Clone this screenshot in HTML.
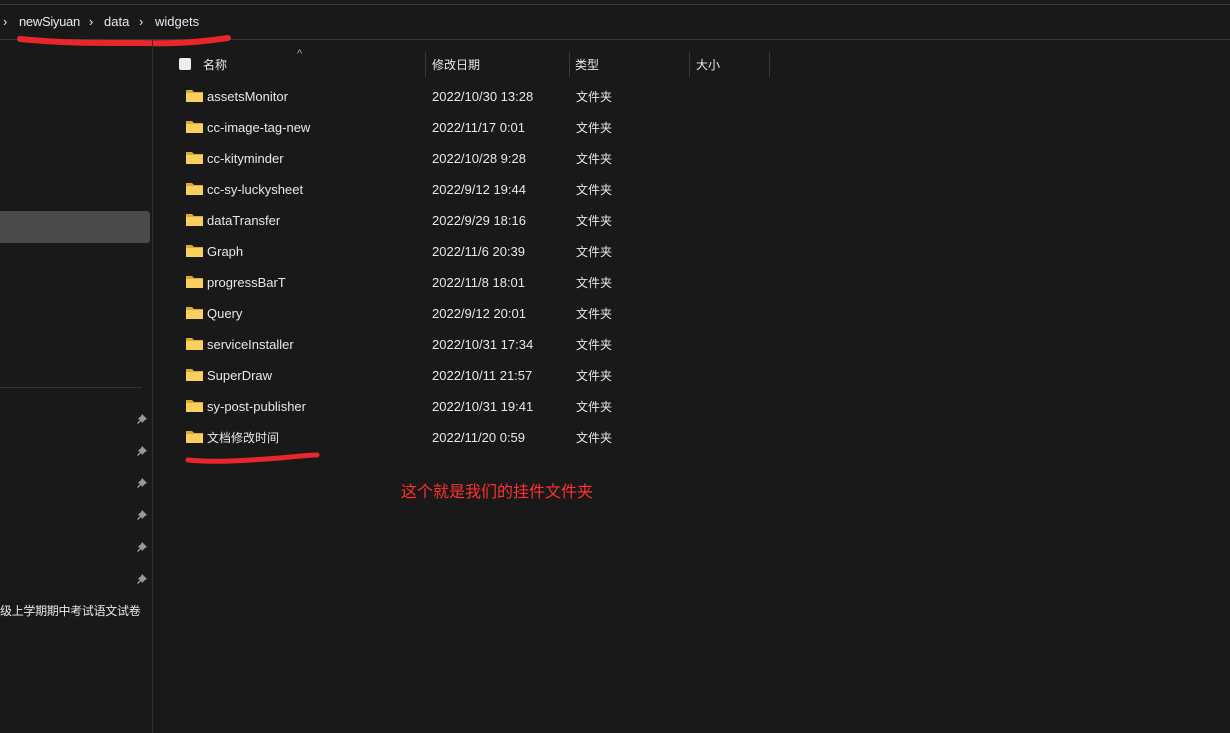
<!DOCTYPE html>
<html><head><meta charset="utf-8"><style>
*{margin:0;padding:0;box-sizing:border-box}
body{width:1230px;height:733px;background:#191919;overflow:hidden;position:relative;font-family:"Liberation Sans","Noto Sans CJK SC",sans-serif;color:#e8e8e8;font-size:13px;line-height:16px}
.a{position:absolute;white-space:nowrap;line-height:16px}
.c{font-size:12px}
.fold{position:absolute;width:17px;height:13px}
.pin{position:absolute;left:136px;width:12px;height:12px}
</style></head><body>
<div class="a" style="left:0;top:0;width:1230px;height:5px;background:#1c1c1c;border-bottom:1px solid #3a3a3a"></div>
<div class="a" style="left:0;top:39px;width:1230px;height:1px;background:#3a3a3a"></div>
<div class="a" style="left:3px;top:14px">›</div>
<div class="a" style="left:19px;top:14px;letter-spacing:-0.3px">newSiyuan</div>
<div class="a" style="left:89px;top:14px">›</div>
<div class="a" style="left:104px;top:14px">data</div>
<div class="a" style="left:139px;top:14px">›</div>
<div class="a" style="left:155px;top:14px">widgets</div>
<svg class="a" style="left:0;top:0" width="1230" height="733">
<path d="M20 39 C60 43 90 43 140 43 C180 44 200 42 228 38" stroke="#e8262c" stroke-width="6" fill="none" stroke-linecap="round"/>
<path d="M188 460 C220 463 250 460 280 458 C300 456 310 455 317 455" stroke="#e8262c" stroke-width="5" fill="none" stroke-linecap="round"/>
</svg>
<div class="a" style="left:152px;top:40px;width:1px;height:693px;background:#2e2e2e"></div>
<div class="a" style="left:0;top:211px;width:150px;height:32px;background:#4a4a4a;border-radius:0 3px 3px 0"></div>
<div class="a" style="left:0;top:387px;width:142px;height:1px;background:#333"></div>
<div class="a c" style="left:0;top:603px;letter-spacing:-0.3px">级上学期期中考试语文试卷</div>
<div class="a" style="left:297px;top:46px;color:#aaa;font-size:11px">^</div>
<div class="a" style="left:179px;top:58px;width:12px;height:12px;background:#eee;border-radius:2px"></div>
<div class="a c" style="left:203px;top:57px">名称</div>
<div class="a c" style="left:432px;top:57px">修改日期</div>
<div class="a c" style="left:575px;top:57px">类型</div>
<div class="a c" style="left:696px;top:57px">大小</div>
<div class="a" style="left:425px;top:52px;width:1px;height:25px;background:#3a3a3a"></div>
<div class="a" style="left:569px;top:52px;width:1px;height:25px;background:#3a3a3a"></div>
<div class="a" style="left:689px;top:52px;width:1px;height:25px;background:#3a3a3a"></div>
<div class="a" style="left:769px;top:52px;width:1px;height:25px;background:#3a3a3a"></div>
<div id="rows"></div>
<div class="a" style="left:401px;top:484px;color:#ff3030;font-size:16px;line-height:18px">这个就是我们的挂件文件夹</div>
<script>
var d=[["assetsMonitor","2022/10/30 13:28"],["cc-image-tag-new","2022/11/17 0:01"],["cc-kityminder","2022/10/28 9:28"],["cc-sy-luckysheet","2022/9/12 19:44"],["dataTransfer","2022/9/29 18:16"],["Graph","2022/11/6 20:39"],["progressBarT","2022/11/8 18:01"],["Query","2022/9/12 20:01"],["serviceInstaller","2022/10/31 17:34"],["SuperDraw","2022/10/11 21:57"],["sy-post-publisher","2022/10/31 19:41"],["文档修改时间","2022/11/20 0:59"]];
var h="";d.forEach(function(r,i){var y=97+i*31;
h+='<svg class="fold" style="left:186px;top:'+(y-8)+'px" viewBox="0 0 17 13"><path d="M0 1h6l2 2h9v10H0z" fill="#e0a82e"/><rect x="0" y="4" width="17" height="9" fill="#f8d060"/></svg>';
h+='<div class="a'+(i==11?' c':'')+'" style="left:207px;top:'+(y-8)+'px">'+r[0]+'</div><div class="a" style="left:432px;top:'+(y-8)+'px">'+r[1]+'</div><div class="a c" style="left:576px;top:'+(y-8)+'px">文件夹</div>';});
for(var i=0;i<6;i++)h+='<svg class="pin" style="top:'+(413+i*32)+'px" viewBox="0 0 12 12"><path d="M6 1l5 5-2 1-2 2-1 1-1-2-3 3-1-1 3-3-2-1 1-1 2-2z" fill="#9a9a9a"/></svg>';
document.getElementById("rows").innerHTML=h;
</script>
</body></html>
